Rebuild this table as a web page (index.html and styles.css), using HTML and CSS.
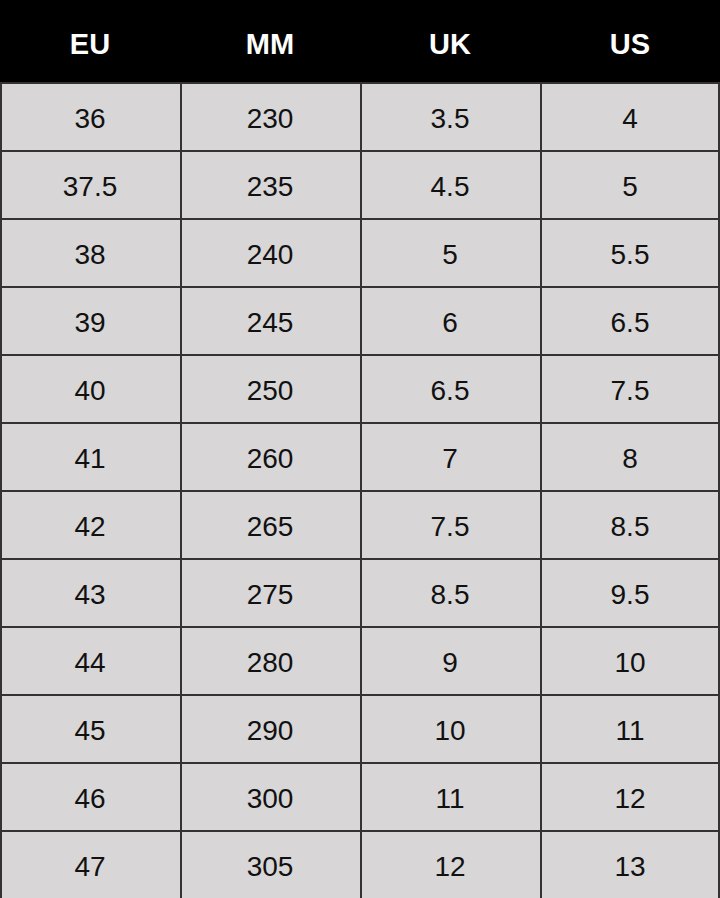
FILE: index.html
```html
<!DOCTYPE html>
<html lang="en">
<head>
<meta charset="utf-8">
<title>Size chart</title>
<link rel="stylesheet" href="styles.css">
</head>
<body>
<div class="chart">
  <div class="head">
    <div class="hcell">EU</div>
    <div class="hcell">MM</div>
    <div class="hcell">UK</div>
    <div class="hcell">US</div>
  </div>
  <div class="body">
    <div class="cell">36</div><div class="cell">230</div><div class="cell">3.5</div><div class="cell">4</div>
    <div class="cell">37.5</div><div class="cell">235</div><div class="cell">4.5</div><div class="cell">5</div>
    <div class="cell">38</div><div class="cell">240</div><div class="cell">5</div><div class="cell">5.5</div>
    <div class="cell">39</div><div class="cell">245</div><div class="cell">6</div><div class="cell">6.5</div>
    <div class="cell">40</div><div class="cell">250</div><div class="cell">6.5</div><div class="cell">7.5</div>
    <div class="cell">41</div><div class="cell">260</div><div class="cell">7</div><div class="cell">8</div>
    <div class="cell">42</div><div class="cell">265</div><div class="cell">7.5</div><div class="cell">8.5</div>
    <div class="cell">43</div><div class="cell">275</div><div class="cell">8.5</div><div class="cell">9.5</div>
    <div class="cell">44</div><div class="cell">280</div><div class="cell">9</div><div class="cell">10</div>
    <div class="cell">45</div><div class="cell">290</div><div class="cell">10</div><div class="cell">11</div>
    <div class="cell">46</div><div class="cell">300</div><div class="cell">11</div><div class="cell">12</div>
    <div class="cell">47</div><div class="cell">305</div><div class="cell">12</div><div class="cell">13</div>
  </div>
</div>
</body>
</html>
```

FILE: styles.css
```css
html, body {
  margin: 0;
  padding: 0;
  background: #d8d6d7;
}
body {
  font-family: "Liberation Sans", Arial, sans-serif;
  width: 720px;
  height: 898px;
  overflow: hidden;
}
.chart {
  width: 720px;
}
.head {
  display: grid;
  grid-template-columns: 180px 180px 180px 180px;
  height: 82px;
  background: #000;
}
.hcell {
  display: flex;
  align-items: center;
  justify-content: center;
  padding-top: 6px;
  color: #fff;
  font-weight: bold;
  font-size: 29px;
}
.body {
  display: grid;
  grid-template-columns: 178px 178px 178px 176px;
  grid-auto-rows: 66px;
  gap: 2px;
  padding: 2px;
  background: #333;
}
.cell {
  display: flex;
  align-items: center;
  justify-content: center;
  padding: 4px 2px 0 0;
  background: #d8d6d7;
  color: #111;
  font-size: 28px;
}
.cell:nth-child(4n) {
  padding-right: 0;
}
```
